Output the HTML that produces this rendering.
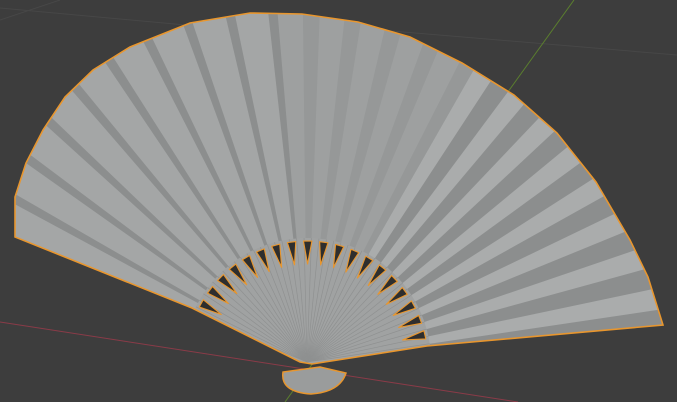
<!DOCTYPE html>
<html><head><meta charset="utf-8"><style>
html,body{margin:0;padding:0;background:#3d3d3d;width:677px;height:402px;overflow:hidden}
svg{display:block;position:absolute;left:0;top:0}
</style></head><body>
<svg id="s" width="677" height="402" viewBox="0 0 677 402" xmlns="http://www.w3.org/2000/svg">
<rect width="677" height="402" fill="#3d3d3d"/>
<line x1="0" y1="8" x2="240" y2="30" stroke="#474747" stroke-width="1"/>
<line x1="380" y1="30" x2="677" y2="55" stroke="#474747" stroke-width="1"/>
<line x1="0" y1="20" x2="60" y2="0" stroke="#474747" stroke-width="1"/>
<line x1="0" y1="322" x2="518" y2="402" stroke="#8a3b48" stroke-width="1"/>
<line x1="574" y1="0" x2="285" y2="402" stroke="#5b7f2e" stroke-width="1"/>
<defs>
<clipPath id="fc"><path id="fp" d="M15,237 L15,197 L26,163 L43,130 L65,97 L93,70 L130,47 L190,23 L250,13 L302,14 L358,22 L410,37 L462,63 L514,95 L557,133 L596,182 L630,240 L648,277 L663,325 L427,346 L312,364 L300,362 L192,308 Z"/></clipPath>
</defs>
<path d="M283,372 Q280,392 311,394 Q340,392 346,373 L320,367 Z" fill="#9a9c9c" stroke="#e8962e" stroke-width="1.5"/>
<g id="g" clip-path="url(#fc)"></g>
<g id="h"></g>
<use href="#fp" fill="none" stroke="#e8962e" stroke-width="1.6"/>
</svg>
<script>
var g=document.getElementById('g'),h=document.getElementById('h'),NS='http://www.w3.org/2000/svg';
var cx=307,cy=362;
function el(p,t,a){var e=document.createElementNS(NS,t);for(var k in a)e.setAttribute(k,a[k]);p.appendChild(e);return e;}
function wedge(a,b,r,c){var A=a*Math.PI/180,B=b*Math.PI/180;
 el(g,'path',{d:'M'+cx+','+cy+' L'+(cx+r*Math.cos(A))+','+(cy+r*Math.sin(A))+' L'+(cx+r*Math.cos(B))+','+(cy+r*Math.sin(B))+' Z',fill:c});}
var a0=-157,a1=-5,N=22,d=(a1-a0)/N;
for(var i=0;i<N;i++){
 var s=a0+i*d,t=i/N,v1,v2,f;
 if(t<0.4){v1=164;v2=140;f=0.78;}
 else if(t<0.62){v1=158;v2=150;f=0.6;}
 else {v1=170;v2=140;f=0.5;}
 wedge(s,s+d*f+0.3,700,'rgb('+v1+','+(v1+2)+','+(v1+2)+')');
 wedge(s+d*f,s+d+0.3,700,'rgb('+v2+','+(v2+2)+','+(v2+2)+')');
}
el(g,'circle',{cx:cx,cy:cy,r:124,fill:'#a0a2a2'});
for(var j=0;j<44;j++){var A=(a0+j*(a1-a0)/44)*Math.PI/180;
 el(g,'line',{x1:cx,y1:cy,x2:cx+124*Math.cos(A),y2:cy+124*Math.sin(A),stroke:'#8f9191','stroke-width':0.7});}
var M=19;
for(var k=0;k<M;k++){
 var am=(-151+k*(-13+151)/(M-1));
 var r2=121,r1=98,w=2.0;
 var p1=[cx+r2*Math.cos((am-w)*Math.PI/180),cy+r2*Math.sin((am-w)*Math.PI/180)];
 var p2=[cx+r2*Math.cos((am+w)*Math.PI/180),cy+r2*Math.sin((am+w)*Math.PI/180)];
 var p3=[cx+r1*Math.cos(am*Math.PI/180),cy+r1*Math.sin(am*Math.PI/180)];
 el(h,'path',{d:'M'+p1+' L'+p2+' L'+p3+' Z',fill:'#2e2e2e',stroke:'#e8962e','stroke-width':1.1,'stroke-linejoin':'round'});
}
</script>
</body></html>
